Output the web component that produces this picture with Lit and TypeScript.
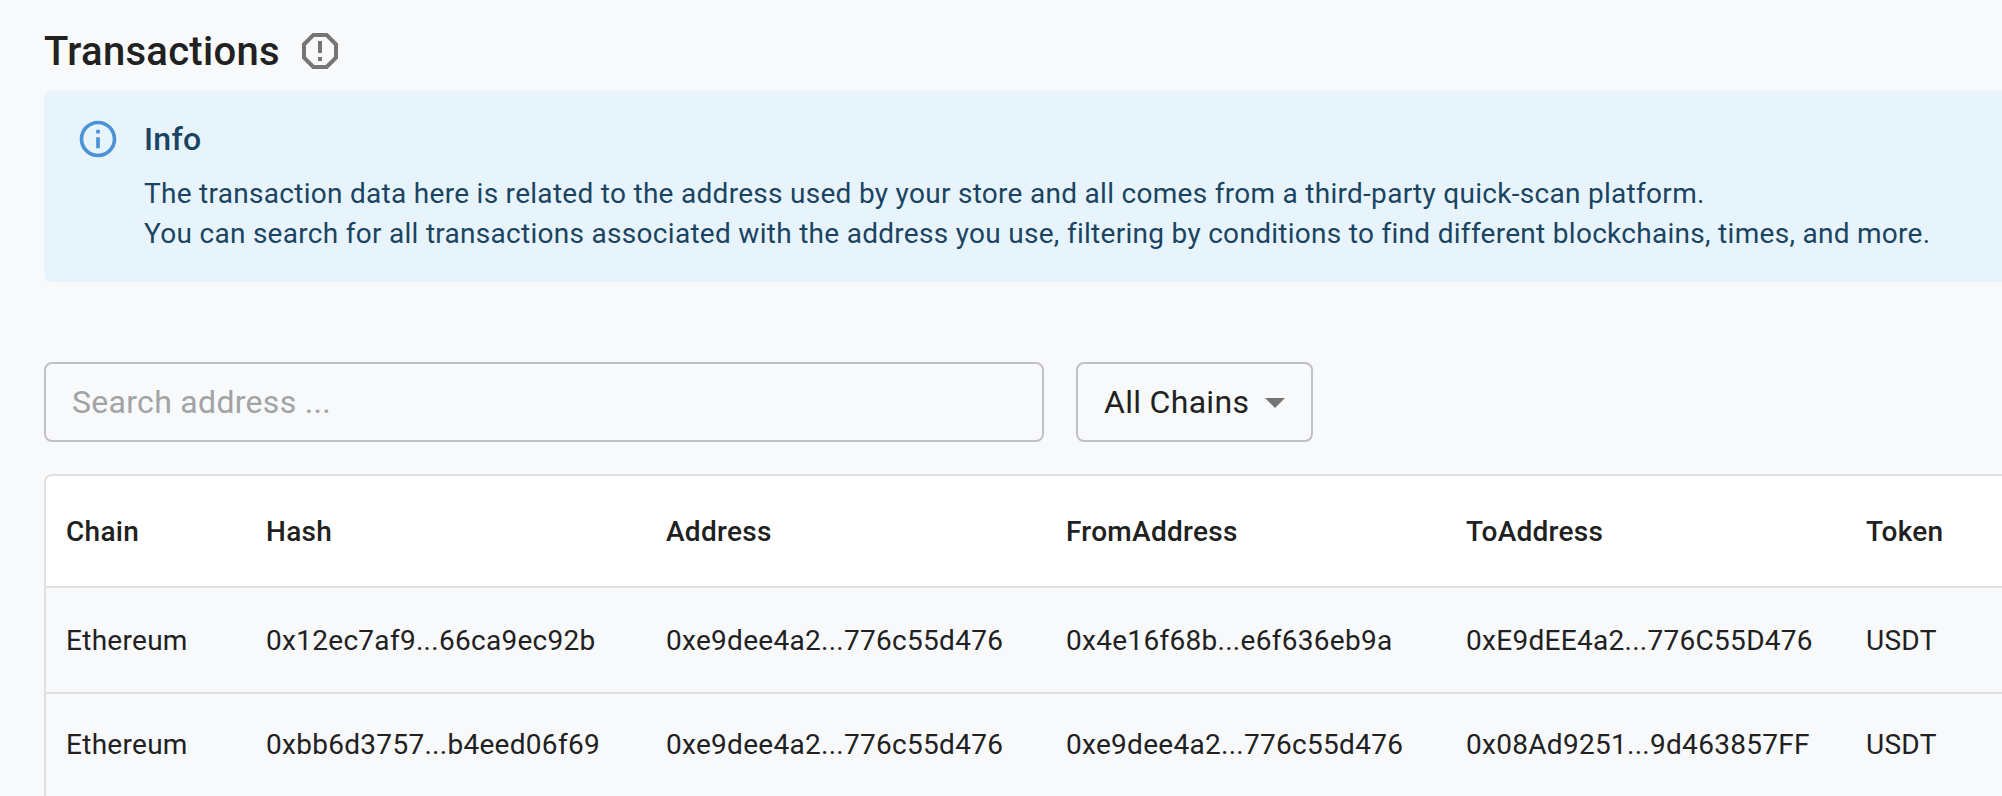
import { LitElement, html, css } from "lit";
import { customElement, state } from "lit/decorators.js";

interface Transaction {
  chain: string;
  hash: string;
  address: string;
  from: string;
  to: string;
  token: string;
}

@customElement("info-alert")
class InfoAlert extends LitElement {
  static styles = css`
    :host {
      display: flex;
      box-sizing: border-box;
      height: 191px;
      padding: 12px 32px;
      border-radius: 8px 0 0 8px;
      background: #e8f4fc;
      color: #1a4461;
      font-size: 28px;
      line-height: 40px;
      letter-spacing: 0.0103em;
      white-space: nowrap;
    }
    .icon {
      flex: none;
      width: 44px;
      height: 44px;
      padding: 14px 0;
      margin-right: 24px;
      fill: #4b93d5;
    }
    .message {
      padding: 16px 0;
    }
    .title {
      margin: -4px 0 11px;
      font-size: 32px;
      font-weight: 500;
      line-height: 48px;
      letter-spacing: 0.00938em;
    }
  `;

  render() {
    return html`
      <svg class="icon" viewBox="0 0 24 24">
        <path
          d="M11 7h2v2h-2zm0 4h2v6h-2zm1-9C6.48 2 2 6.48 2 12s4.48 10 10 10 10-4.48 10-10S17.52 2 12 2zm0 18c-4.41 0-8-3.59-8-8s3.59-8 8-8 8 3.59 8 8-3.59 8-8 8z"
        />
      </svg>
      <div class="message">
        <div class="title">Info</div>
        <div>The transaction data here is related to the address used by your store and all comes from a third-party quick-scan platform.</div>
        <div>You can search for all transactions associated with the address you use, filtering by conditions to find different blockchains, times, and more.</div>
      </div>
    `;
  }
}

@customElement("transaction-table")
class TransactionTable extends LitElement {
  static styles = css`
    :host {
      display: block;
      box-sizing: border-box;
      border: 2px solid #e0e0e0;
      border-right: 0;
      border-bottom: 0;
      border-radius: 8px 0 0 0;
      overflow: hidden;
      height: 322px;
      font-size: 28px;
      letter-spacing: 0.0103em;
    }
    .row {
      display: grid;
      grid-template-columns: 200px 400px 400px 400px 400px 156px;
      line-height: 106px;
      height: 104px;
    }
    .row + .row {
      box-shadow: inset 0 2px 0 #e0e0e0;
    }
    .row.head {
      height: 110px;
      line-height: 112px;
      font-weight: 500;
      background: #fff;
      border-bottom: 2px solid #e0e0e0;
    }
    .head + .row {
      box-shadow: none;
    }
    .cell {
      padding: 0 20px;
      white-space: nowrap;
    }
  `;

  @state() private columns = ["Chain", "Hash", "Address", "FromAddress", "ToAddress", "Token"];

  @state() private rows: Transaction[] = [
    {
      chain: "Ethereum",
      hash: "0x12ec7af9...66ca9ec92b",
      address: "0xe9dee4a2...776c55d476",
      from: "0x4e16f68b...e6f636eb9a",
      to: "0xE9dEE4a2...776C55D476",
      token: "USDT",
    },
    {
      chain: "Ethereum",
      hash: "0xbb6d3757...b4eed06f69",
      address: "0xe9dee4a2...776c55d476",
      from: "0xe9dee4a2...776c55d476",
      to: "0x08Ad9251...9d463857FF",
      token: "USDT",
    },
  ];

  render() {
    return html`
      <div class="row head">${this.columns.map((c) => html`<div class="cell">${c}</div>`)}</div>
      ${this.rows.map(
        (r) => html`<div class="row">
          ${[r.chain, r.hash, r.address, r.from, r.to, r.token].map((v) => html`<div class="cell">${v}</div>`)}
        </div>`
      )}
    `;
  }
}

@customElement("app-root")
class AppRoot extends LitElement {
  static styles = css`
    :host {
      display: block;
      box-sizing: border-box;
      width: 100%;
      height: 796px;
      overflow: hidden;
      padding-left: 44px;
      background: #f8f9fb;
      color: #212121;
      font-family: Roboto, "Liberation Sans", sans-serif;
    }
    .heading {
      display: flex;
      align-items: center;
      gap: 16px;
      height: 80px;
      padding-top: 11px;
    }
    h1 {
      margin: 0;
      padding-top: 1px;
      font-size: 40px;
      font-weight: 500;
      line-height: 64px;
      letter-spacing: 0.0075em;
    }
    .report {
      width: 48px;
      height: 48px;
      fill: #757575;
    }
    .filters {
      display: flex;
      gap: 32px;
      margin: 80px 0 32px;
      font-size: 32px;
      letter-spacing: 0.00938em;
    }
    .search,
    .select {
      box-sizing: border-box;
      height: 80px;
      border: 2px solid #bfc0c2;
      border-radius: 8px;
      background: transparent;
      color: inherit;
      font: inherit;
      letter-spacing: inherit;
    }
    .search {
      width: 1000px;
      padding: 0 26px;
      outline: none;
    }
    .search::placeholder {
      color: #a2a3a4;
      opacity: 1;
    }
    .select {
      display: flex;
      align-items: center;
      justify-content: space-between;
      width: 237px;
      padding: 0 12px 0 26px;
    }
    .arrow {
      width: 48px;
      height: 48px;
      fill: #757575;
    }
  `;

  render() {
    return html`
      <div class="heading">
        <h1>Transactions</h1>
        <svg class="report" viewBox="0 0 24 24">
          <path
            d="M15.73 3H8.27L3 8.27v7.46L8.27 21h7.46L21 15.73V8.27L15.73 3zM19 14.9L14.9 19H9.1L5 14.9V9.1L9.1 5h5.8L19 9.1v5.8zM11 7h2v6h-2zM11 15h2v2h-2z"
          />
        </svg>
      </div>
      <info-alert></info-alert>
      <div class="filters">
        <input class="search" placeholder="Search address ..." />
        <button class="select">
          <span>All Chains</span>
          <svg class="arrow" viewBox="0 0 24 24"><path d="M7 10l5 5 5-5z" /></svg>
        </button>
      </div>
      <transaction-table></transaction-table>
    `;
  }
}
